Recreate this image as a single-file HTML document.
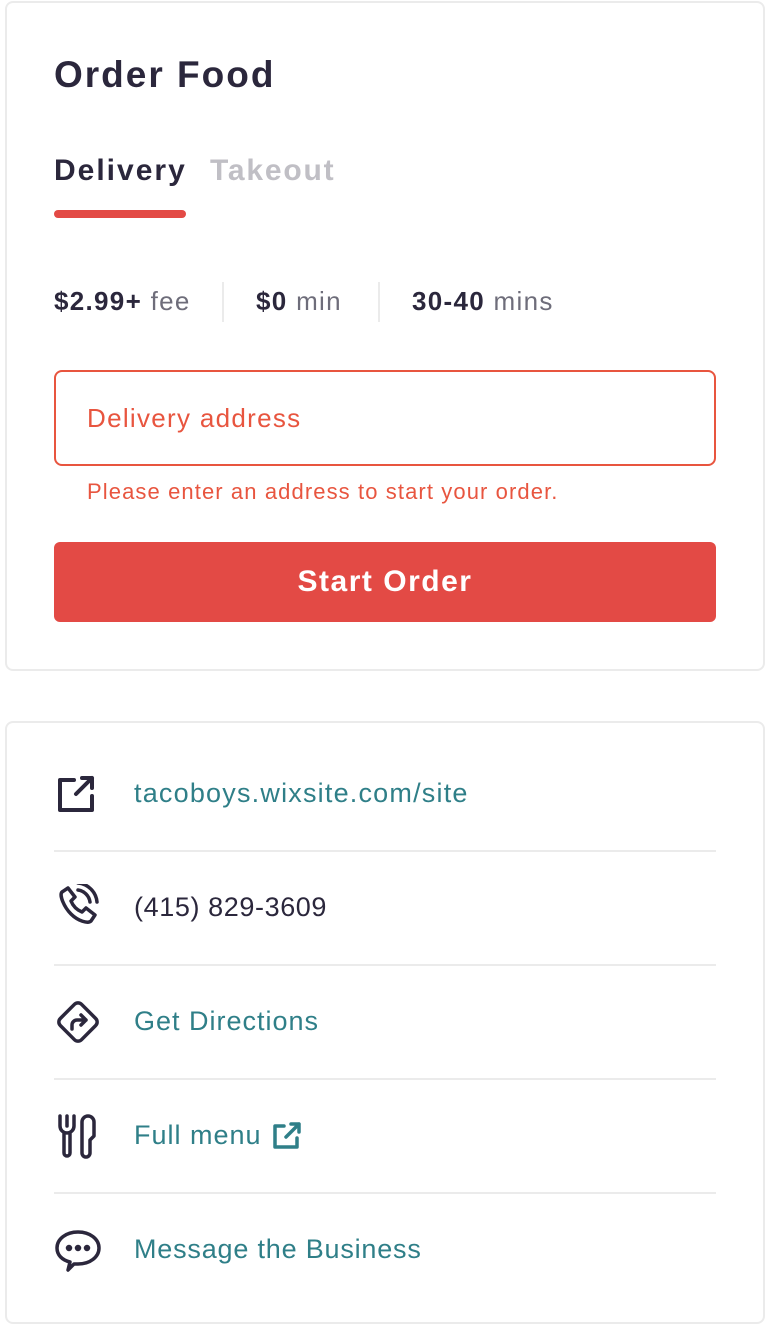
<!DOCTYPE html>
<html><head><meta charset="utf-8"><style>
*{margin:0;padding:0;box-sizing:border-box}
body{width:770px;height:1328px;background:#fff;font-family:"Liberation Sans","DejaVu Sans",sans-serif;position:relative;color:#2b273c}
.card{position:absolute;left:5px;width:760px;border:2px solid #ebebeb;border-radius:8px;background:#fff}
.a{position:absolute;white-space:nowrap}
.sep{position:absolute;left:54px;width:662px;height:2px;background:#ebebeb}
.link{color:#2f7f88;font-size:27px}
svg{position:absolute}
</style></head><body>
<div class="card" style="top:1px;height:670px"></div>
<div class="a" style="left:54px;top:54px;font-size:37px;font-weight:bold;letter-spacing:2px">Order Food</div>
<div class="a" style="left:54px;top:154px;font-size:30px;font-weight:bold;letter-spacing:2px">Delivery</div>
<div class="a" style="left:210px;top:154px;font-size:30px;font-weight:bold;color:#c0bfc5;letter-spacing:1.8px">Takeout</div>
<div class="a" style="left:54px;top:210px;width:132px;height:8px;border-radius:4px;background:#e34a45"></div>
<div class="a" style="left:54px;top:286px;font-size:26px;letter-spacing:1.3px"><b>$2.99+</b> <span style="color:#6e6d7a">fee</span></div>
<div class="a" style="left:222px;top:282px;width:2px;height:40px;background:#ebebeb"></div>
<div class="a" style="left:256px;top:286px;font-size:26px;letter-spacing:1.3px"><b>$0</b> <span style="color:#6e6d7a">min</span></div>
<div class="a" style="left:378px;top:282px;width:2px;height:40px;background:#ebebeb"></div>
<div class="a" style="left:412px;top:286px;font-size:26px;letter-spacing:1.3px"><b>30-40</b> <span style="color:#6e6d7a">mins</span></div>
<div class="a" style="left:54px;top:370px;width:662px;height:96px;border:2px solid #e8553f;border-radius:8px"></div>
<div class="a" style="left:87px;top:403px;font-size:26px;color:#e8553f;letter-spacing:1.3px">Delivery address</div>
<div class="a" style="left:87px;top:479px;font-size:22px;color:#e8553f;letter-spacing:1.1px">Please enter an address to start your order.</div>
<div class="a" style="left:54px;top:542px;width:662px;height:80px;border-radius:6px;background:#e34a45;color:#fff;font-size:30px;font-weight:bold;text-align:center;line-height:80px;letter-spacing:1.5px">Start Order</div>

<div class="card" style="top:721px;height:603px"></div>
<svg style="left:56px;top:774px" width="42" height="40" viewBox="0 0 42 40" fill="none" stroke="#2b273c" stroke-width="4" stroke-linecap="round" stroke-linejoin="round"><path d="M18 6H4v30h32V22"/><path d="M20 20L36 4M26 4h10v10"/></svg>
<div class="a link" style="left:134px;top:778px;letter-spacing:1.2px">tacoboys.wixsite.com/site</div>
<div class="sep" style="top:850px"></div>
<svg style="left:54px;top:884px" width="48" height="48" viewBox="0 0 48 48" fill="none" stroke="#2b273c" stroke-width="3.5" stroke-linecap="round" stroke-linejoin="round"><path d="M8 8l6-4 7 9-4 4c2 5 6 9 11 11l4-4 9 7-4 6c-3 3-13 0-20-7S5 11 8 8z"/><path d="M24 6a14 14 0 0 1 12 12M24 -1a21 21 0 0 1 19 19"/></svg>
<div class="a" style="left:134px;top:892px;font-size:27px;letter-spacing:0.6px">(415) 829-3609</div>
<div class="sep" style="top:964px"></div>
<svg style="left:52px;top:996px" width="52" height="52" viewBox="0 0 52 52" fill="none" stroke="#2b273c" stroke-width="3.5" stroke-linecap="round" stroke-linejoin="round"><rect x="11" y="11" width="30" height="30" rx="5" transform="rotate(45 26 26)"/><path d="M20 33v-4a5 5 0 0 1 5-5h9M29 19l5 5-5 5"/></svg>
<div class="a link" style="left:134px;top:1006px;letter-spacing:1px">Get Directions</div>
<div class="sep" style="top:1078px"></div>
<svg style="left:56px;top:1112px" width="44" height="48" viewBox="0 0 44 48" fill="none" stroke="#2b273c" stroke-width="3.5" stroke-linecap="round" stroke-linejoin="round"><path d="M4 4v10a7 7 0 0 0 14 0V4M11 4v10M8 21v20a3 3 0 0 0 6 0V21"/><path d="M26 41V10a6 6 0 0 1 12 0v14l-4 4v13a4 4 0 0 1-8 0z"/></svg>
<div class="a link" style="left:134px;top:1120px;letter-spacing:1px">Full menu</div>
<svg style="left:272px;top:1122px" width="30" height="28" viewBox="0 0 30 28" fill="none" stroke="#2f7f88" stroke-width="3.5" stroke-linecap="round" stroke-linejoin="round"><path d="M12 4H3v21h22V16"/><path d="M14 15L27 2M19 2h8v8"/></svg>
<div class="sep" style="top:1192px"></div>
<svg style="left:54px;top:1228px" width="48" height="46" viewBox="0 0 48 46" fill="none" stroke="#2b273c" stroke-width="3.5" stroke-linecap="round" stroke-linejoin="round"><path d="M14 42l2-8C8 32 3 27 3 20 3 11 12 4 24 4s21 7 21 16-9 16-21 16c-2 0-3 0-4 0z"/><circle cx="15" cy="20" r="1.5" fill="#2b273c"/><circle cx="24" cy="20" r="1.5" fill="#2b273c"/><circle cx="33" cy="20" r="1.5" fill="#2b273c"/></svg>
<div class="a link" style="left:134px;top:1234px;letter-spacing:0.8px">Message the Business</div>
</body></html>
